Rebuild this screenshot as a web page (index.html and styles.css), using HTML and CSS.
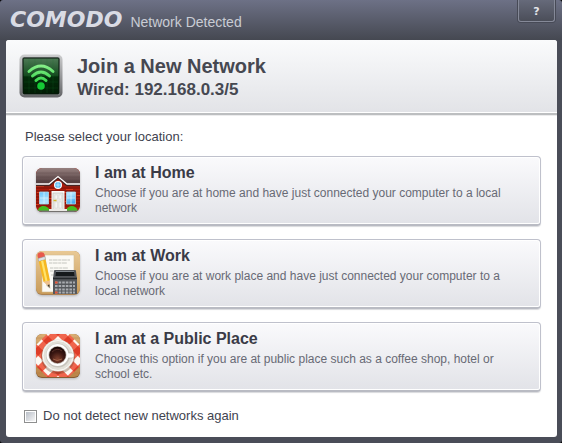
FILE: index.html
```html
<!DOCTYPE html>
<html lang="en">
<head>
    <meta charset="UTF-8">
    <meta name="viewport" content="width=device-width, initial-scale=1.0">
    <title>COMODO Network Detected</title>
    <link rel="stylesheet" href="styles.css">
</head>
<body>
    <div class="window">
        <header class="titlebar">
            <span class="logo">COMODO</span>
            <span class="caption">Network Detected</span>
            <button type="button" class="help">?</button>
        </header>

        <main class="content">
            <div class="banner">
                <svg class="wifi" viewBox="0 0 44 44" aria-hidden="true">
                    <defs>
                        <linearGradient id="frame" x1="0" y1="0" x2="0" y2="1">
                            <stop offset="0" stop-color="#cccdce"/>
                            <stop offset="1" stop-color="#636467"/>
                        </linearGradient>
                        <linearGradient id="screen" x1="0" y1="0" x2="0" y2="1">
                            <stop offset="0" stop-color="#4d7a55"/>
                            <stop offset=".48" stop-color="#164b20"/>
                            <stop offset=".52" stop-color="#032c0a"/>
                            <stop offset="1" stop-color="#011b04"/>
                        </linearGradient>
                        <linearGradient id="signal" x1="0" y1="10" x2="0" y2="36" gradientUnits="userSpaceOnUse">
                            <stop offset="0" stop-color="#8df08e"/>
                            <stop offset="1" stop-color="#11c92e"/>
                        </linearGradient>
                    </defs>
                    <rect x=".5" y=".5" width="43" height="43" rx="5" fill="url(#frame)"/>
                    <rect x="3" y="3" width="38" height="38" rx="2" fill="#999c9d"/>
                    <rect x="4" y="4" width="36" height="36" rx="1" fill="url(#screen)" stroke="#06150a"/>
                    <path d="M10 5v34M16 5v34M22 5v34M28 5v34M34 5v34M5 16h34M5 22h34M5 28h34M5 34h34" stroke="#1d7a30" stroke-opacity=".3" stroke-width=".6"/>
                    <g fill="none" stroke="url(#signal)" stroke-width="3" stroke-linecap="round">
                        <path d="M10 17.500Q22 6.500 34 17.500"/>
                        <path d="M13.500 22Q22 14 30.500 22"/>
                        <path d="M17 26.500Q22 21.500 27 26.500"/>
                    </g>
                    <circle cx="22" cy="32" r="3.800" fill="#15c935"/>
                </svg>
                <div>
                    <h1>Join a New Network</h1>
                    <h2>Wired: 192.168.0.3/5</h2>
                </div>
            </div>

            <div class="choices">
                <p class="prompt">Please select your location:</p>

                <button type="button" class="choice">
                    <svg class="icon" viewBox="0 0 44 44" aria-hidden="true">
                        <defs>
                            <linearGradient id="roof" x1="0" y1="0" x2="0" y2="1">
                                <stop offset="0" stop-color="#96807f"/>
                                <stop offset="1" stop-color="#4d383a"/>
                            </linearGradient>
                            <linearGradient id="pane" x1="0" y1="0" x2="1" y2="1">
                                <stop offset="0" stop-color="#6bc5fb"/>
                                <stop offset=".5" stop-color="#b5e6ff"/>
                                <stop offset="1" stop-color="#2e9ff0"/>
                            </linearGradient>
                            <clipPath id="tile"><rect width="44" height="44" rx="6"/></clipPath>
                        </defs>
                        <g clip-path="url(#tile)">
                            <path d="M0 0h44v44H0z" fill="#a91b0b"/>
                            <path d="M0 20h44M0 23h44M0 26h44M0 29h44M0 32h44M0 35h44M0 38h44" stroke="#6f1009" stroke-width=".8"/>
                            <path d="M0 18.500h8M13 21.500h6M30 21.500h7M1 24.500h4M26 24.500h5M13 30.500h3M29 33.500h3M0 36.500h3M41 27.500h3" stroke="#d83a1c"/>
                            <path d="M0 0h44v16H0z" fill="url(#roof)"/>
                            <path d="M0 5h44M0 9h44M0 13h44" stroke="#40292c" stroke-opacity=".2"/>
                            <path d="M13 18L22 9.500 31 18z" fill="#a91b0b"/>
                            <path d="M0 17h13L22 9.500l9 7.500h13" fill="none" stroke="#462321" stroke-width="2.500"/>
                            <path d="M0 16h13L22 8.500 31 16h13" fill="none" stroke="#fff" stroke-width="1.300"/>
                            <circle cx="22" cy="17" r="4" fill="#fff"/>
                            <circle cx="22" cy="17" r="3" fill="#5cbdf4"/>
                            <path d="M22 14v6M19 17h6" stroke="#eaf8ff" stroke-width=".6"/>
                            <path d="M3 23h10v14H3zM30 23h10v14H30z" fill="#7c1710"/>
                            <path d="M3.500 24h9v12h-9zM30.500 24h9v12h-9z" fill="url(#pane)" stroke="#b4dcec" stroke-width=".8"/>
                            <path d="M8 24v12M4 30h8M35 24v12M31 30h8" stroke="#e9faff" stroke-width=".6"/>
                            <path d="M15.500 23h13v20h-13z" fill="#f9f9f7"/>
                            <path d="M17 25h10v17H17z" fill="#e9e9e6" stroke="#bebdb9" stroke-width=".6"/>
                            <path d="M19 27h2.500v4H19zM23 27h2.500v4H23zM19 34h2.500v6H19zM23 34h2.500v6H23z" fill="#f5f5f3" stroke="#d2d2d2" stroke-width=".4"/>
                            <path d="M17.500 32.500h3" stroke="#d5b52c" stroke-width="1.500"/>
                            <path d="M2 43c0-6 10-7 12 0zM30 43c1-6 10-7 12 0z" fill="#46bd20"/>
                            <path d="M0 42.500h44V44H0z" fill="#74716f"/>
                            <path d="M13 41h18v2H13z" fill="#ebe9e6"/>
                        </g>
                    </svg>
                    <span class="label">
                        <strong>I am at Home</strong>
                        <span class="desc">Choose if you are at home and have just connected your computer to a local network</span>
                    </span>
                </button>

                <button type="button" class="choice">
                    <svg class="icon" viewBox="0 0 44 44" aria-hidden="true">
                        <defs>
                            <linearGradient id="board" x1="0" y1="0" x2="0" y2="1">
                                <stop offset="0" stop-color="#e9c994"/>
                                <stop offset="1" stop-color="#c89b5a"/>
                            </linearGradient>
                        </defs>
                        <rect width="44" height="44" rx="6" fill="#ac8252"/>
                        <rect width="44" height="43" rx="6" fill="url(#board)"/>
                        <path d="M6 4h32v37H6z" fill="#fbfaf5" stroke="#d5bd91" stroke-width=".6"/>
                        <path d="M13 9h21M13 12h18M14 17h18M14 20h16M15 24h5" stroke="#b8b7b1" stroke-width=".8" stroke-dasharray="3 .6 5 .6"/>
                        <path d="M2.500 6L9 3.500 14 34l.5 4-4-3z" fill="#9c7c46" fill-opacity=".4"/>
                        <path d="M1.500 5Q1 2 4.500 1.300T8.500 3.500L9 6 2.200 8z" fill="#e8584b"/>
                        <path d="M2 7.500L8.800 5.500 9.500 8.500 2.800 10.500z" fill="#dce1e5" stroke="#8d9091" stroke-width=".5"/>
                        <path d="M2.800 10.500L9.500 8.500 14 29.500 7.500 31z" fill="#f6b71f"/>
                        <path d="M5 10L7.200 9.400 11.500 30 9.500 30.500z" fill="#ffe36c"/>
                        <path d="M7.500 31L14 29.500 13.500 36z" fill="#efc28d"/>
                        <path d="M11.500 34l2-.5V37z" fill="#373027"/>
                        <path d="M18 20q0-1 1-1h20q1 0 1 1l1 8H17z" fill="#505357"/>
                        <path d="M20 21h18l.5 4h-19z" fill="#15191b"/>
                        <path d="M20 20.500h18" stroke="#8a9298" stroke-width=".8"/>
                        <path d="M17 26h24v17H17z" fill="#55585c"/>
                        <path d="M17 27.500h24" stroke="#24282b" stroke-width="1.500"/>
                        <path d="M19 31.500h20M19 35h20M19 38.500h20M19 41.500h20" stroke="#a9acb0" stroke-width="2" stroke-dasharray="2.600 1"/>
                        <path d="M19 31.500h2.600M19 41.500h2.600" stroke="#e65335" stroke-width="2"/>
                    </svg>
                    <span class="label">
                        <strong>I am at Work</strong>
                        <span class="desc">Choose if you are at work place and have just connected your computer to a local network</span>
                    </span>
                </button>

                <button type="button" class="choice">
                    <svg class="icon" viewBox="0 0 44 44" aria-hidden="true">
                        <defs>
                            <linearGradient id="wood" x1="0" y1="0" x2="0" y2="1">
                                <stop offset="0" stop-color="#d9ad73"/>
                                <stop offset="1" stop-color="#ba8347"/>
                            </linearGradient>
                            <radialGradient id="coffee" cx=".5" cy=".75" r=".7">
                                <stop offset="0" stop-color="#84432f"/>
                                <stop offset=".6" stop-color="#3b1712"/>
                                <stop offset="1" stop-color="#1d0907"/>
                            </radialGradient>
                            <pattern id="cloth" width="14" height="14" patternUnits="userSpaceOnUse" patternTransform="translate(22 2) rotate(45)">
                                <path d="M0 0h14v14H0z" fill="#f0654d"/>
                                <path d="M0 0h7v7H0z" fill="#fdf8f2"/>
                                <path d="M7 7h7v7H7z" fill="#de3d28"/>
                            </pattern>
                            <clipPath id="table"><rect width="44" height="43" rx="6"/></clipPath>
                        </defs>
                        <rect width="44" height="44" rx="6" fill="#865c32"/>
                        <g clip-path="url(#table)">
                            <path d="M0 0h44v44H0z" fill="url(#wood)"/>
                            <path d="M0 4h44M0 9h44M0 34h44M0 39h44" stroke="#aa743b" stroke-opacity=".45" stroke-width=".7"/>
                            <path d="M11 0h22l11 11v21L32 44H12L0 32V11z" fill="url(#cloth)"/>
                        </g>
                        <circle cx="22" cy="23" r="17" fill="#68442f" fill-opacity=".35"/>
                        <circle cx="22" cy="21.500" r="16" fill="#e2e0d8"/>
                        <circle cx="22" cy="21.500" r="15" fill="none" stroke="#fbfaf6"/>
                        <circle cx="22" cy="21.500" r="12" fill="#c7c4bc"/>
                        <rect x="29" y="19" width="9" height="5" rx="2" fill="#fff" stroke="#bbb7ad" stroke-width=".6"/>
                        <circle cx="21.500" cy="21" r="11" fill="#fff"/>
                        <circle cx="21.500" cy="21" r="9" fill="#bdb3a9"/>
                        <circle cx="21.500" cy="21" r="8.300" fill="url(#coffee)"/>
                        <path d="M16 18Q21 13 26 17" fill="none" stroke="#5b3029"/>
                        <path d="M17 25q4 3 9 0" fill="none" stroke="#b87859" stroke-width=".7"/>
                    </svg>
                    <span class="label">
                        <strong>I am at a Public Place</strong>
                        <span class="desc">Choose this option if you are at public place such as a coffee shop, hotel or school etc.</span>
                    </span>
                </button>

                <div class="option">
                    <input type="checkbox" id="nodetect">
                    <label for="nodetect">Do not detect new networks again</label>
                </div>
            </div>
        </main>
    </div>
</body>
</html>
```
FILE: styles.css
```css
* {
    box-sizing: border-box;
}
body {
    margin: 0;
    background: #000;
    font-family: "Liberation Sans", Arial, sans-serif;
    font-size: 13px;
    color: #41434f;
}
.window {
    display: flex;
    flex-direction: column;
    min-height: 100vh;
    padding: 0 5px 6px 6px;
    border-radius: 3px;
    background: #4a4d58 linear-gradient(#6d7186, #454851) no-repeat 0 0 / 100% 40px;
}
.titlebar {
    display: flex;
    align-items: flex-start;
    height: 40px;
    padding: 0 2px 0 4px;
}
.logo {
    font-family: "DejaVu Sans", sans-serif;
    font-size: 22px;
    font-weight: bold;
    font-style: italic;
    line-height: 40px;
    color: #d9dbe4;
}
.caption {
    margin-left: 8px;
    font-size: 14px;
    line-height: 44px;
    color: #c9ccd4;
}
.help {
    width: 37px;
    height: 22px;
    margin-left: auto;
    padding: 0;
    border: 1px solid #858998;
    border-top: 0;
    border-radius: 0 0 3px 3px;
    background: linear-gradient(#666a7a, #4b4e59);
    box-shadow: 0 0 0 1px #474a56;
    font-family: "DejaVu Sans", sans-serif;
    font-size: 11px;
    font-weight: bold;
    line-height: 24px;
    color: #e4e5ea;
}
.content {
    flex: 1;
    border-radius: 3px;
    background: #fff;
    overflow: hidden;
}
.banner {
    display: flex;
    gap: 14px;
    height: 75px;
    padding: 14px 13px 0;
    border-bottom: 2px solid #bcbec0;
    background: linear-gradient(#fafbfc, #e2e3e7);
    box-shadow: inset 0 -1px #fff, 0 1px #ececed;
}
.wifi {
    width: 44px;
    height: 44px;
}
.banner h1,
.banner h2 {
    margin: 0;
    line-height: 24px;
    color: #464851;
}
.banner h1 {
    font-size: 20px;
}
.banner h2 {
    font-size: 17px;
}
.choices {
    display: flex;
    flex-direction: column;
    padding: 13px 16px 0;
}
.prompt {
    margin: 0 3px 10px;
    line-height: 18px;
}
.choice {
    display: flex;
    align-items: flex-start;
    gap: 15px;
    height: 70px;
    margin-bottom: 13px;
    padding: 11px 13px;
    border: 1px solid #bfc1cc;
    border-bottom: 2px solid #b9bbc3;
    border-radius: 4px;
    background: linear-gradient(#fafafc, #e2e3e8);
    box-shadow: inset 0 0 0 1px #fff, 0 1px 1px #d9dadd;
    font-family: inherit;
    text-align: left;
    cursor: pointer;
}
.choice:hover {
    background: linear-gradient(#fff, #eaebef);
}
.icon {
    flex: none;
    width: 44px;
    height: 44px;
    filter: drop-shadow(0 1px 1px #8888);
}
.label {
    margin-top: -5px;
}
.label strong {
    display: block;
    font-size: 16px;
    line-height: 20px;
    color: #3a3b47;
}
.desc {
    display: block;
    margin-top: 3px;
    font-size: 12px;
    line-height: 15px;
    color: #686a75;
}
.option {
    display: flex;
    align-items: center;
    gap: 6px;
    margin: 2px 2px 0;
    line-height: 18px;
}
.option input {
    appearance: none;
    width: 13px;
    height: 13px;
    margin: 0;
    padding: 1px;
    border: 1px solid #8e8f8f;
    background: linear-gradient(135deg, #b9bfc8, #f6f6f6) content-box #f4f4f4;
}
.option input:checked {
    background: #454851 content-box;
}
```
